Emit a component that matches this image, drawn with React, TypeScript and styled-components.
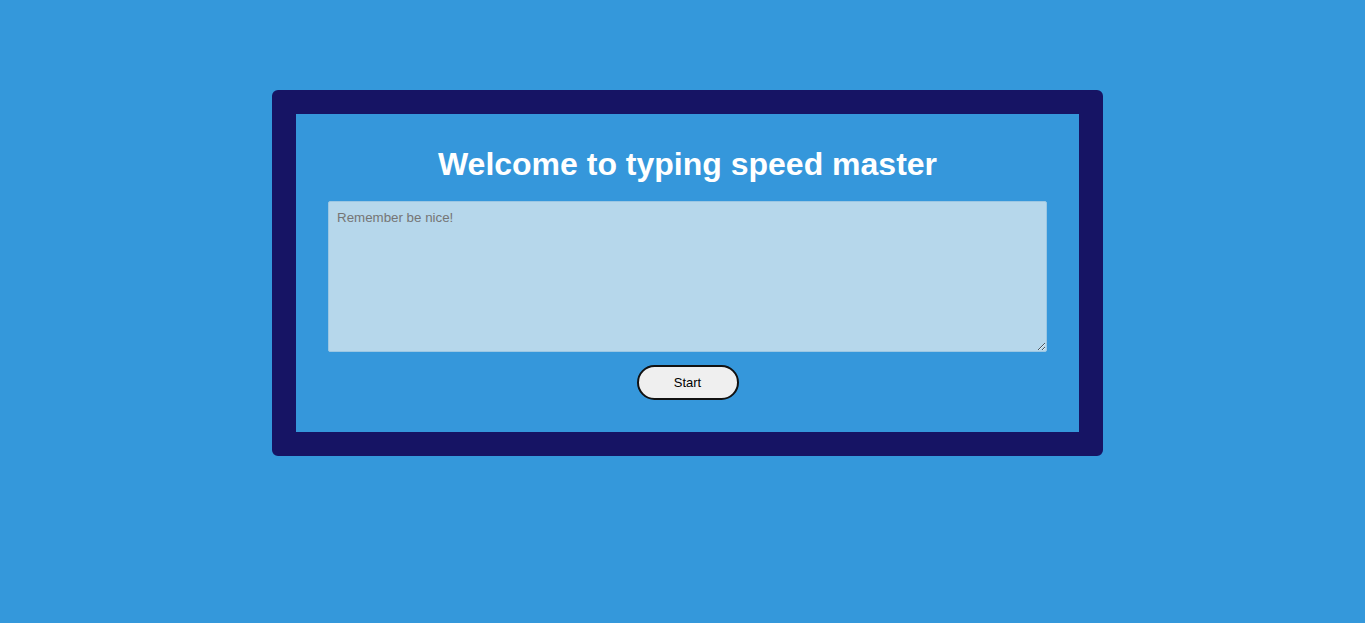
import React from "react";
import styled, { createGlobalStyle } from "styled-components";

const GlobalStyle = createGlobalStyle`
  html, body {
    margin: 0;
    padding: 0;
    background: #3498db;
    font-family: "Liberation Sans", Arial, sans-serif;
  }
`;

const Page = styled.main`
  min-height: 623px;
  display: flex;
  justify-content: center;
  align-items: flex-start;
  padding: 90px 0 0 10px;
  box-sizing: border-box;
`;

const Card = styled.section`
  width: 831px;
  box-sizing: border-box;
  border: 24px solid #161464;
  border-radius: 6px;
  background: #3597db;
  padding: 32px 32px 32px;
  display: flex;
  flex-direction: column;
  align-items: center;
`;

const Title = styled.h1`
  margin: 0 0 18px;
  font-size: 32px;
  line-height: 37px;
  font-weight: 700;
  color: #ffffff;
  text-align: center;
`;

const TextArea = styled.textarea`
  width: 719px;
  height: 151px;
  box-sizing: border-box;
  padding: 8px;
  border: 1px solid #9cc7e3;
  border-radius: 2px;
  background: #b6d7eb;
  font-family: "Liberation Sans", Arial, sans-serif;
  font-size: 13.333px;
  color: #333;
  outline: none;
  &::placeholder {
    color: #757575;
  }
`;

const StartButton = styled.button`
  margin-top: 13px;
  width: 102px;
  height: 35px;
  border: 2px solid #111;
  border-radius: 18px;
  background: #efefef;
  font-family: "Liberation Sans", Arial, sans-serif;
  font-size: 13px;
  color: #000;
  cursor: pointer;
`;

export default function App() {
  return (
    <>
      <GlobalStyle />
      <Page>
        <Card>
          <Title>Welcome to typing speed master</Title>
          <TextArea placeholder="Remember be nice!" />
          <StartButton>Start</StartButton>
        </Card>
      </Page>
    </>
  );
}
